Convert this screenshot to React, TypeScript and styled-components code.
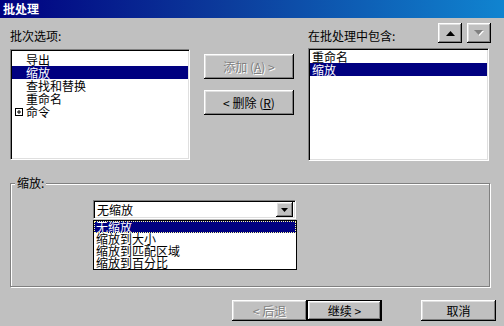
import React from "react";
import styled, { createGlobalStyle, css } from "styled-components";

const Global = createGlobalStyle`
  html, body { margin: 0; padding: 0; background: #c0c0c0; }
  * { box-sizing: border-box; }
`;

const FONT = `"Noto Sans CJK SC", "Noto Sans", sans-serif`;

const Window = styled.div`
  width: 504px;
  height: 326px;
  background: #c0c0c0;
  display: flex;
  flex-direction: column;
  font-family: ${FONT};
  font-size: 12px;
  color: #000;
  overflow: hidden;
`;

const TitleBar = styled.div`
  height: 18px;
  background: linear-gradient(90deg, #000080 0%, #0c3c9c 45%, #1084d0 100%);
  color: #fff;
  font-weight: bold;
  font-size: 12px;
  line-height: 18px;
  padding-left: 3px;
`;

const TopSection = styled.div`
  display: grid;
  grid-template-columns: 180px 90px 183px;
  column-gap: 14px;
  padding: 5px 0 0 10px;
`;

const Column = styled.div`
  display: flex;
  flex-direction: column;
`;

const Header = styled.div`
  height: 20px;
  display: flex;
  align-items: flex-end;
  justify-content: space-between;
`;

const Label = styled.span`
  line-height: 14px;
  white-space: nowrap;
`;

const sunken = css`
  border-style: solid;
  border-width: 1px;
  border-color: #808080 #fff #fff #808080;
  box-shadow: inset 1px 1px 0 #000, inset -1px -1px 0 #dfdfdf;
`;

const ListBox = styled.div<{ $w: number; $h: number; $top: number; $pad: number }>`
  ${sunken};
  width: ${(p) => p.$w}px;
  height: ${(p) => p.$h}px;
  margin-top: ${(p) => p.$top}px;
  background: #fff;
  padding: ${(p) => p.$pad + 1}px 1px 2px 1px;
`;

const ListRow = styled.div<{ $selected?: boolean; $indent: number }>`
  height: 13px;
  line-height: 13px;
  display: flex;
  align-items: center;
  padding-left: ${(p) => p.$indent}px;
  white-space: nowrap;
  background: ${(p) => (p.$selected ? "#000080" : "transparent")};
  color: ${(p) => (p.$selected ? "#fff" : "#000")};
`;

const raised = css`
  background: #c0c0c0;
  border: none;
  box-shadow: inset -1px -1px 0 #000, inset 1px 1px 0 #fff,
    inset -2px -2px 0 #808080, inset 2px 2px 0 #dfdfdf;
`;

const Button = styled.button<{ $w: number; $h: number; $default?: boolean }>`
  ${raised};
  width: ${(p) => p.$w}px;
  height: ${(p) => p.$h}px;
  padding: 0;
  font-family: ${FONT};
  font-size: 12px;
  line-height: 14px;
  color: #000;
  display: flex;
  align-items: center;
  justify-content: center;
  white-space: nowrap;
  ${(p) =>
    p.$default &&
    css`
      border: 1px solid #000;
    `}
  &:disabled {
    color: #808080;
    text-shadow: 1px 1px 0 #fff;
  }
  u {
    text-decoration: underline;
  }
`;

const MiddleColumn = styled.div`
  display: flex;
  flex-direction: column;
  gap: 11px;
  padding-top: 31px;
`;

const ArrowButtons = styled.div`
  display: flex;
  gap: 5px;
`;

const ArrowButton = styled.button`
  ${raised};
  width: 24px;
  height: 20px;
  padding: 0;
  display: flex;
  align-items: center;
  justify-content: center;
`;

const GroupBox = styled.div`
  position: relative;
  margin: 22px 0 0 10px;
  width: 480px;
  height: 104px;
  border: 1px solid #808080;
  box-shadow: inset 1px 1px 0 #fff, 1px 1px 0 #fff;
  padding: 16px 0 0 82px;
`;

const GroupLabel = styled.span`
  position: absolute;
  top: -8px;
  left: 4px;
  padding: 0 2px;
  background: #c0c0c0;
  line-height: 14px;
`;

const Combo = styled.div`
  position: relative;
  ${sunken};
  width: 203px;
  height: 19px;
  background: #fff;
  display: flex;
  align-items: center;
  justify-content: space-between;
  padding: 1px 2px 1px 3px;
`;

const ComboText = styled.span`
  line-height: 14px;
`;

const ComboButton = styled.div`
  ${raised};
  width: 17px;
  height: 15px;
  display: flex;
  align-items: center;
  justify-content: center;
`;

const DropList = styled.div`
  position: absolute;
  top: 19px;
  left: -1px;
  width: 204px;
  border: 1px solid #000;
  background: #fff;
  z-index: 2;
`;

const DropRow = styled.div<{ $selected?: boolean }>`
  height: 12px;
  line-height: 12px;
  padding-left: 2px;
  white-space: nowrap;
  background: ${(p) => (p.$selected ? "#000080" : "#fff")};
  color: ${(p) => (p.$selected ? "#fff" : "#000")};
  outline: ${(p) => (p.$selected ? "1px dotted #ffffa0" : "none")};
  outline-offset: -1px;
`;

const Footer = styled.div`
  display: flex;
  justify-content: flex-end;
  padding: 13px 8px 0 0;
`;

const Spacer = styled.div`
  width: 39px;
`;

const PlusIcon = styled.svg`
  margin: 0 3px 0 3px;
  flex: none;
`;

const PlusBox = () => (
  <PlusIcon width="8" height="8" viewBox="0 0 8 8">
    <rect x="0.5" y="0.5" width="7" height="7" fill="#fff" stroke="#000" />
    <path d="M2 4H6M4 2V6" stroke="#000" />
  </PlusIcon>
);

const UpTri = () => (
  <svg width="9" height="5" viewBox="0 0 9 5">
    <path d="M4.5 0L9 5H0Z" fill="#000" />
  </svg>
);

const DownTriDisabled = () => (
  <svg width="10" height="6" viewBox="0 0 10 6">
    <path d="M1 1H10L5.5 6Z" fill="#fff" />
    <path d="M0 0H9L4.5 5Z" fill="#808080" />
  </svg>
);

const DownTri = () => (
  <svg width="7" height="4" viewBox="0 0 7 4">
    <path d="M0 0H7L3.5 4Z" fill="#000" />
  </svg>
);

const leftItems = [
  { t: "导出" },
  { t: "缩放", sel: true },
  { t: "查找和替换" },
  { t: "重命名" },
  { t: "命令", plus: true },
];

const dropItems = ["无缩放", "缩放到大小", "缩放到匹配区域", "缩放到百分比"];

export default function App() {
  return (
    <Window>
      <Global />
      <TitleBar>批处理</TitleBar>
      <TopSection>
        <Column>
          <Header>
            <Label>批次选项:</Label>
          </Header>
          <ListBox $w={180} $h={111} $top={6} $pad={2}>
            {leftItems.map((it) => (
              <ListRow key={it.t} $selected={it.sel} $indent={it.plus ? 0 : 14}>
                {it.plus && <PlusBox />}
                {it.t}
              </ListRow>
            ))}
          </ListBox>
        </Column>
        <MiddleColumn>
          <Button $w={90} $h={25} disabled>
            添加 (<u>A</u>) &gt;
          </Button>
          <Button $w={90} $h={25}>
            &lt; 删除 (<u>R</u>)
          </Button>
        </MiddleColumn>
        <Column>
          <Header>
            <Label>在批处理中包含:</Label>
            <ArrowButtons>
              <ArrowButton>
                <UpTri />
              </ArrowButton>
              <ArrowButton disabled>
                <DownTriDisabled />
              </ArrowButton>
            </ArrowButtons>
          </Header>
          <ListBox $w={181} $h={113} $top={5} $pad={0}>
            <ListRow $indent={2}>重命名</ListRow>
            <ListRow $indent={2} $selected>
              缩放
            </ListRow>
          </ListBox>
        </Column>
      </TopSection>
      <GroupBox>
        <GroupLabel>缩放:</GroupLabel>
        <Combo>
          <ComboText>无缩放</ComboText>
          <ComboButton>
            <DownTri />
          </ComboButton>
          <DropList>
            {dropItems.map((d, i) => (
              <DropRow key={d} $selected={i === 0}>
                {d}
              </DropRow>
            ))}
          </DropList>
        </Combo>
      </GroupBox>
      <Footer>
        <Button $w={75} $h={21} disabled>
          &lt; 后退
        </Button>
        <Button $w={75} $h={21} $default>
          继续 &gt;
        </Button>
        <Spacer />
        <Button $w={75} $h={21}>
          取消
        </Button>
      </Footer>
    </Window>
  );
}
